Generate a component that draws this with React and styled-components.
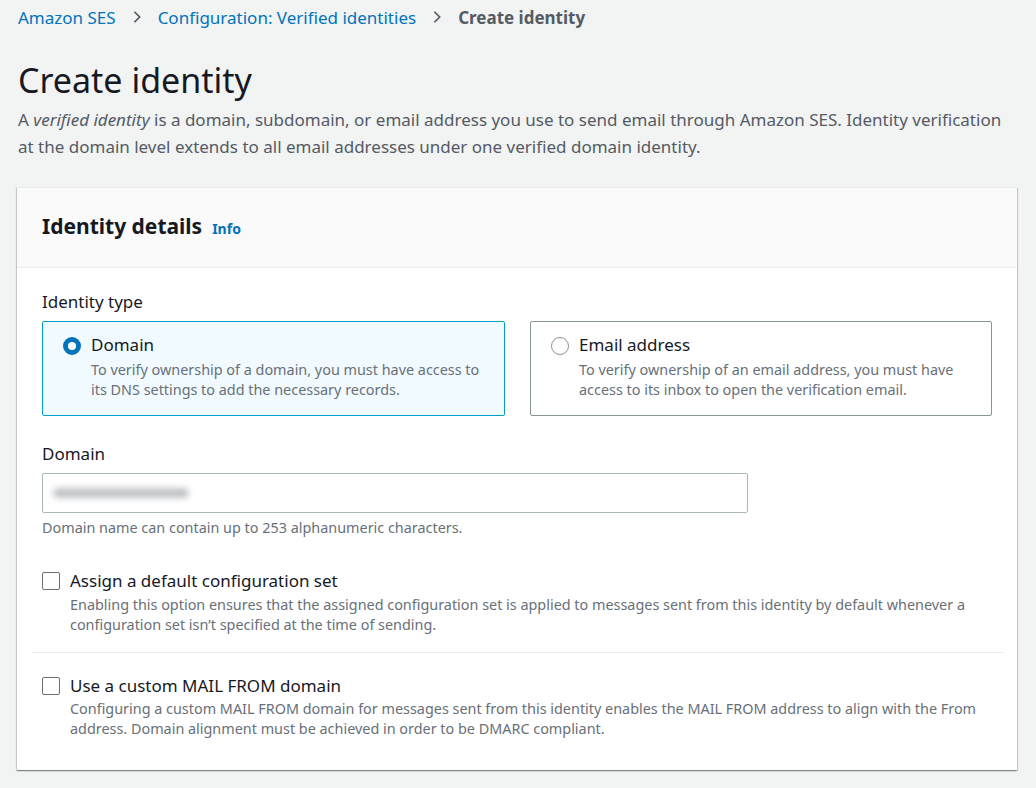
import React from 'react';
import styled, { createGlobalStyle } from 'styled-components';

const GlobalStyle = createGlobalStyle`
  html, body {
    margin: 0;
    padding: 0;
    background: #f2f3f3;
  }
  body {
    font-family: "Noto Sans", "Open Sans", sans-serif;
    color: #16191f;
  }
`;

const Page = styled.div`
  padding: 3px 19px 18px 17px;
`;

const Crumbs = styled.nav`
  display: flex;
  align-items: center;
  gap: 14px;
  height: 28px;
  font-size: 17px;
  padding-left: 1px;
`;

const Crumb = styled.span`
  color: ${(p) => (p.current ? '#545b64' : '#0073bb')};
  font-weight: ${(p) => (p.current ? 700 : 400)};
`;

const Chevron = () => (
  <svg width="14" height="14" viewBox="0 0 16 16">
    <path d="M5 2l6 6-6 6" fill="none" stroke="#545b64" strokeWidth="2" />
  </svg>
);

const Title = styled.h1`
  margin: 25px 0 0 1px;
  font-size: 34px;
  font-weight: 400;
  line-height: 48px;
`;

const Lead = styled.p`
  margin: 2px 0 0 1px;
  font-size: 17px;
  line-height: 27px;
  color: #545b64;
  em {
    font-style: italic;
  }
`;

const Card = styled.section`
  margin-top: 27px;
  background: #fff;
  border-top: 1px solid #eaeded;
  box-shadow: 0 1px 1px 0 rgba(0, 28, 36, 0.3), 1px 1px 1px 0 rgba(0, 28, 36, 0.15),
    -1px 1px 1px 0 rgba(0, 28, 36, 0.15);
`;

const CardHead = styled.header`
  display: flex;
  align-items: baseline;
  gap: 10px;
  height: 80px;
  box-sizing: border-box;
  padding: 23px 25px 0;
  background: #fafafa;
  border-bottom: 1px solid #eaeded;
`;

const CardTitle = styled.h2`
  margin: 0;
  font-size: 21px;
  font-weight: 700;
  line-height: 30px;
`;

const InfoLink = styled.a`
  font-size: 14px;
  font-weight: 700;
  color: #0073bb;
  text-decoration: none;
`;

const CardBody = styled.div`
  padding: 22px 25px 31px;
`;

const Label = styled.div`
  font-size: 17px;
  line-height: 24px;
  margin-bottom: 7px;
`;

const Tiles = styled.div`
  display: grid;
  grid-template-columns: 463px 462px;
  gap: 25px;
`;

const Tile = styled.label`
  display: flex;
  gap: 10px;
  box-sizing: border-box;
  height: 95px;
  padding: 11px 20px 0;
  border: 1px solid ${(p) => (p.selected ? '#00a1c9' : '#879596')};
  border-radius: 2px;
  background: ${(p) => (p.selected ? '#f1faff' : '#fff')};
`;

const Radio = styled.span`
  flex: none;
  box-sizing: border-box;
  width: 18px;
  height: 18px;
  margin-top: 4px;
  border-radius: 50%;
  border: ${(p) => (p.checked ? '5px solid #0073bb' : '1px solid #879596')};
  background: #fff;
`;

const OptionTitle = styled.div`
  font-size: 17px;
  line-height: 24px;
  color: #16191f;
`;

const OptionDesc = styled.div`
  margin-top: ${(p) => p.gap || '2px'};
  font-size: 14.4px;
  line-height: 20px;
  color: #687078;
`;

const Field = styled.div`
  margin-top: 26px;
`;

const Input = styled.div`
  display: flex;
  align-items: center;
  box-sizing: border-box;
  width: 706px;
  height: 40px;
  padding: 0 10px;
  border: 1px solid #aab7b8;
  border-radius: 2px;
  background: #fff;
`;

const Redacted = styled.span`
  display: block;
  width: 136px;
  height: 10px;
  border-radius: 5px;
  background: #bfc3c6;
  filter: blur(3px);
`;

const Hint = styled.div`
  margin-top: 5px;
  font-size: 14.4px;
  line-height: 20px;
  color: #687078;
`;

const CheckRow = styled.div`
  display: flex;
  gap: 10px;
  padding: ${(p) => p.pad};
`;

const Box = styled.span`
  flex: none;
  box-sizing: border-box;
  width: 18px;
  height: 18px;
  margin-top: 3px;
  border: 1px solid #687078;
  border-radius: 2px;
  background: #fff;
`;

const Divider = styled.hr`
  margin: 0 -12px 0 -11px;
  border: 0;
  border-top: 1px solid #eaeded;
`;

export default function App() {
  return (
    <>
      <GlobalStyle />
      <Page>
        <Crumbs>
          <Crumb>Amazon SES</Crumb>
          <Chevron />
          <Crumb>Configuration: Verified identities</Crumb>
          <Chevron />
          <Crumb current>Create identity</Crumb>
        </Crumbs>
        <Title>Create identity</Title>
        <Lead>
          A <em>verified identity</em> is a domain, subdomain, or email address you use to send email
          through Amazon SES. Identity verification at the domain level extends to all email
          addresses under one verified domain identity.
        </Lead>
        <Card>
          <CardHead>
            <CardTitle>Identity details</CardTitle>
            <InfoLink>Info</InfoLink>
          </CardHead>
          <CardBody>
            <Label>Identity type</Label>
            <Tiles>
              <Tile selected>
                <Radio checked />
                <div>
                  <OptionTitle>Domain</OptionTitle>
                  <OptionDesc gap="3px">
                    To verify ownership of a domain, you must have access to its DNS settings to add
                    the necessary records.
                  </OptionDesc>
                </div>
              </Tile>
              <Tile>
                <Radio />
                <div>
                  <OptionTitle>Email address</OptionTitle>
                  <OptionDesc gap="3px">
                    To verify ownership of an email address, you must have access to its inbox to
                    open the verification email.
                  </OptionDesc>
                </div>
              </Tile>
            </Tiles>
            <Field>
              <Label>Domain</Label>
              <Input>
                <Redacted />
              </Input>
              <Hint>Domain name can contain up to 253 alphanumeric characters.</Hint>
            </Field>
            <CheckRow pad="31px 0 17px">
              <Box />
              <div>
                <OptionTitle>Assign a default configuration set</OptionTitle>
                <OptionDesc>
                  Enabling this option ensures that the assigned configuration set is applied to
                  messages sent from this identity by default whenever a configuration set isn’t
                  specified at the time of sending.
                </OptionDesc>
              </div>
            </CheckRow>
            <Divider />
            <CheckRow pad="21px 0 0">
              <Box />
              <div>
                <OptionTitle>Use a custom MAIL FROM domain</OptionTitle>
                <OptionDesc gap="1px">
                  Configuring a custom MAIL FROM domain for messages sent from this identity enables
                  the MAIL FROM address to align with the From address. Domain alignment must be
                  achieved in order to be DMARC compliant.
                </OptionDesc>
              </div>
            </CheckRow>
          </CardBody>
        </Card>
      </Page>
    </>
  );
}
